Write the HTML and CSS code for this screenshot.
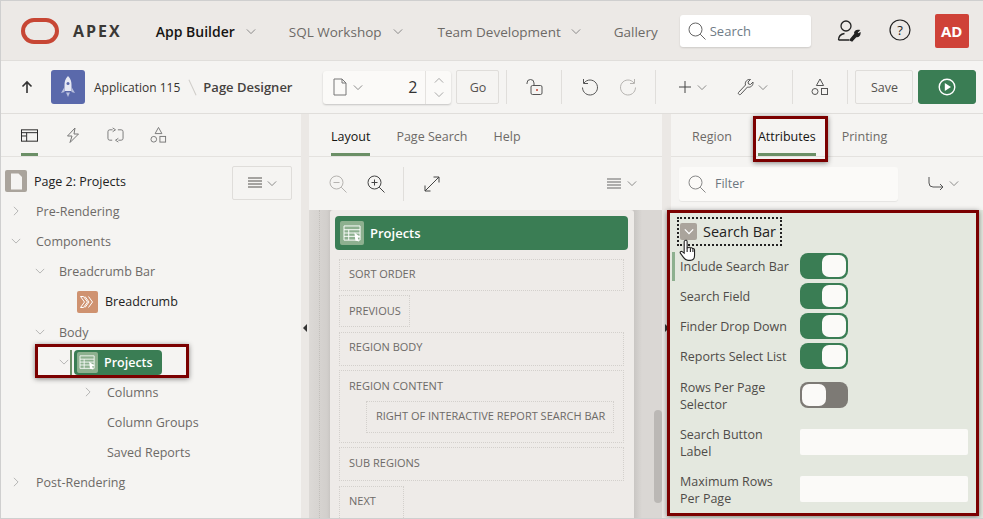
FILE: index.html
```html
<!DOCTYPE html>
<html lang="en">
<head>
  <meta charset="UTF-8">
  <title>Page Designer</title>
  <link rel="stylesheet" href="styles.css">
</head>
<body>
  <svg class="defs" width="0" height="0">
    <symbol id="chev" viewBox="0 0 12 8"><path d="M1 1.500l5 5 5-5" fill="none" stroke="currentColor"/></symbol>
    <symbol id="chev-r" viewBox="0 0 8 12"><path d="M1.500 1l5 5-5 5" fill="none" stroke="currentColor"/></symbol>
    <symbol id="menu" viewBox="0 0 14 12"><path d="M0 1h14M0 4h14M0 7h14M0 10h14" stroke="currentColor" fill="none"/></symbol>
    <symbol id="glass" viewBox="0 0 18 18"><circle cx="7.500" cy="7.500" r="6.500" fill="none" stroke="currentColor"/><path d="M12.200 12.200l5.300 5.300" stroke="currentColor" fill="none"/></symbol>
    <symbol id="shapes" viewBox="0 0 18 18"><path d="M9 1l3.600 6.500H5.400z" fill="none" stroke="currentColor"/><circle cx="4" cy="13.500" r="3" fill="none" stroke="currentColor"/><rect x="10.500" y="10.500" width="6" height="6" fill="none" stroke="currentColor"/></symbol>
    <symbol id="report" viewBox="0 0 20 18"><path d="M1 1h17v15H1z M1 5h17M1 8.500h17M1 12h17M6 5v11" fill="none" stroke="#fff"/><path d="M12 8l6.500 5-3 .5 1.500 4-4-1z" fill="#fff"/></symbol>
  </svg>

  <div class="app">
    <header class="topbar">
      <svg class="logo" width="38" height="26" viewBox="0 0 38 26"><rect x="2" y="2" width="34" height="22" rx="11" fill="none" stroke="#c74634" stroke-width="4"/></svg>
      <span class="brand">APEX</span>
      <nav class="mainnav">
        <a class="current">App Builder <svg class="caret"><use href="#chev"/></svg></a>
        <a>SQL Workshop <svg class="caret"><use href="#chev"/></svg></a>
        <a>Team Development <svg class="caret"><use href="#chev"/></svg></a>
        <a>Gallery</a>
      </nav>
      <div class="topsearch">
        <svg width="18" height="18"><use href="#glass"/></svg>
        <span>Search</span>
      </div>
      <svg class="topicon" width="24" height="24" viewBox="0 0 24 24" fill="none" stroke="#222" stroke-width="1.300"><circle cx="9" cy="7" r="5"/><path d="M1.500 21c0-4 3-6 6-6.500M1.500 21H12"/><path d="M13 21l5-6c-1-2 1-4 4-3.500l-2 2 1 1.500 2-1c0 3-2 4-4 3.500l-4 4.500z" fill="#222"/></svg>
      <svg class="topicon help" width="22" height="22" viewBox="0 0 22 22"><circle cx="11" cy="11" r="10" fill="none" stroke="#222" stroke-width="1.200"/><text x="11" y="15.500" text-anchor="middle" class="helptext">?</text></svg>
      <span class="avatar">AD</span>
    </header>

    <div class="toolbar">
      <svg class="up" width="12" height="14" viewBox="0 0 12 14"><path d="M6 13V2M1.500 6.500L6 2l4.500 4.500" fill="none" stroke="#333" stroke-width="1.600"/></svg>
      <span class="appicon">
        <svg width="16" height="24" viewBox="0 0 16 24"><path d="M8 1c3 3 3.500 6 3.500 9v6h-7v-6C4.500 7 5 4 8 1z" fill="#e6e8f3"/><circle cx="8" cy="8.500" r="1.500" fill="#5a69ab"/><path d="M4.500 12L1 18l3.500-1zM11.500 12L15 18l-3.500-1z" fill="#b9c0de"/><path d="M6 17.500h4L8 22z" fill="#b9c0de"/></svg>
      </span>
      <span class="crumb">Application 115</span>
      <span class="slash"></span>
      <span class="crumb strong">Page Designer</span>

      <div class="pagepick">
        <span class="pick-left">
          <svg width="14" height="18" viewBox="0 0 14 18"><path d="M1 1h8l4 4v12H1z M9 1v4h4" fill="none" stroke="#777"/></svg>
          <svg class="caret"><use href="#chev"/></svg>
        </span>
        <span class="pick-num">2</span>
        <span class="spin">
          <svg class="spin-up" width="10" height="7"><use href="#chev"/></svg>
          <svg width="10" height="7"><use href="#chev"/></svg>
        </span>
      </div>
      <button class="btn go">Go</button>
      <i class="sep"></i>
      <svg class="tool lock" width="20" height="18" viewBox="0 0 20 18" fill="none" stroke="#555"><rect x="6" y="7.500" width="11" height="9" rx="1.500"/><path d="M9 7.500V5a3.500 3.500 0 0 0-7 0v1"/><circle cx="12" cy="12" r="1" fill="#c74634" stroke="none"/></svg>
      <i class="sep"></i>
      <svg class="tool undo" width="18" height="18" viewBox="0 0 18 18" fill="none" stroke="#555"><path d="M3 5a7.500 7.500 0 1 1-1.500 4.500M2.500 1v4.500H7"/></svg>
      <svg class="tool redo" width="18" height="18" viewBox="0 0 18 18" fill="none" stroke="#b5b3b0"><path d="M15 5a7.500 7.500 0 1 0 1.500 4.500M15.500 1v4.500H11"/></svg>
      <i class="sep"></i>
      <span class="tool plus">
        <svg width="12" height="12" viewBox="0 0 12 12"><path d="M0 6h12M6 0v12" stroke="#444" fill="none"/></svg>
        <svg class="caret"><use href="#chev"/></svg>
      </span>
      <span class="tool wrench">
        <svg width="18" height="18" viewBox="0 0 18 18" fill="none" stroke="#555"><path d="M1.500 14.500l7-7.500c-1-3 1.500-6 5-5.500l-2.500 2.500.5 2 2 .5L16 4c.5 3.500-2.500 6-5.500 5l-7 7.500c-1 .8-3-1-2-2z"/></svg>
        <svg class="caret"><use href="#chev"/></svg>
      </span>
      <i class="sep"></i>
      <svg class="tool shapes" width="18" height="18"><use href="#shapes"/></svg>
      <i class="sep"></i>
      <button class="btn save">Save</button>
      <button class="btn run">
        <svg width="18" height="18" viewBox="0 0 18 18"><circle cx="9" cy="9" r="7.800" fill="none" stroke="#fff" stroke-width="1.400"/><path d="M6.800 5l6.200 4-6.200 4z" fill="#fff"/></svg>
      </button>
    </div>

    <div class="panels">
      <section class="panel left">
        <div class="tabs icontabs">
          <span class="tab active">
            <svg width="18" height="13" viewBox="0 0 18 13" fill="none" stroke="#222"><rect x=".5" y=".5" width="17" height="12"/><path d="M.5 3.500h17M6 3.500v9M.5 7h5"/></svg>
          </span>
          <span class="tab">
            <svg width="14" height="16" viewBox="0 0 14 16" fill="none" stroke="#777"><path d="M9 1L1.500 9H6l-2 6.500L12.500 7H8z"/></svg>
          </span>
          <span class="tab">
            <svg width="18" height="16" viewBox="0 0 18 16" fill="none" stroke="#777"><path d="M6 2.500H3a2 2 0 0 0-2 2v7a2 2 0 0 0 2 2h2.500M12 13.500h3a2 2 0 0 0 2-2v-7a2 2 0 0 0-2-2h-3.500M6 .5l3 2-3 2M12 11.500l-3 2 3 2"/></svg>
          </span>
          <span class="tab">
            <svg width="18" height="18"><use href="#shapes"/></svg>
          </span>
        </div>
        <div class="tree">
          <div class="tree-head">
            <span class="pageicon"><svg width="13" height="17" viewBox="0 0 13 17"><path d="M1 .5h7.500L12 4v12.500H1z" fill="#f5f4f2"/></svg></span>
            <span class="pagetitle">Page 2: Projects</span>
            <button class="btn menubtn"><svg width="14" height="12"><use href="#menu"/></svg><svg class="caret"><use href="#chev"/></svg></button>
          </div>
          <div class="node l0"><svg class="tw-r"><use href="#chev-r"/></svg>Pre-Rendering</div>
          <div class="node l0"><svg class="tw-d"><use href="#chev"/></svg>Components</div>
          <div class="node l1"><svg class="tw-d"><use href="#chev"/></svg>Breadcrumb Bar</div>
          <div class="node l2 dark">
            <span class="crumbicon"><svg width="16" height="12" viewBox="0 0 16 12" fill="none" stroke="#fff"><path d="M.5.500h3l4 5.500-4 5.500h-3l4-5.500zM5 .5l4 5.500-4 5.500M8.500.5l4 5.500-4 5.500"/></svg></span>Breadcrumb
          </div>
          <div class="node l1"><svg class="tw-d"><use href="#chev"/></svg>Body</div>
          <div class="node l2 sel">
            <svg class="tw-d"><use href="#chev"/></svg>
            <i class="selbar"></i>
            <span class="pill"><span class="regicon"><svg width="17" height="15"><use href="#report"/></svg></span>Projects</span>
          </div>
          <div class="node l3"><svg class="tw-r"><use href="#chev-r"/></svg>Columns</div>
          <div class="node l3">Column Groups</div>
          <div class="node l3">Saved Reports</div>
          <div class="node l0"><svg class="tw-r"><use href="#chev-r"/></svg>Post-Rendering</div>
        </div>
      </section>

      <div class="gutter"><i class="handle to-left"></i></div>

      <section class="panel center">
        <div class="tabs">
          <span class="tab active">Layout</span>
          <span class="tab">Page Search</span>
          <span class="tab">Help</span>
        </div>
        <div class="gridbar">
          <svg class="zoomout" width="18" height="18" viewBox="0 0 18 18" fill="none" stroke="#b5b3b0"><circle cx="7.500" cy="7.500" r="6.500"/><path d="M12.200 12.200l5.300 5.300M4.500 7.500h6"/></svg>
          <svg class="zoomin" width="18" height="18" viewBox="0 0 18 18" fill="none" stroke="#444"><circle cx="7.500" cy="7.500" r="6.500"/><path d="M12.200 12.200l5.300 5.300M4.500 7.500h6M7.500 4.500v6"/></svg>
          <i class="sep"></i>
          <svg class="expand" width="16" height="16" viewBox="0 0 16 16" fill="none" stroke="#444"><path d="M1 15L15 1M9.500 1H15v5.500M1 9.500V15h5.500"/></svg>
          <span class="gridmenu"><svg width="14" height="12"><use href="#menu"/></svg><svg class="caret"><use href="#chev"/></svg></span>
        </div>
        <div class="canvas">
          <div class="card">
            <div class="cardhead"><span class="cardicon"><svg width="19" height="17"><use href="#report"/></svg></span>Projects</div>
            <div class="slot s-sort">SORT ORDER</div>
            <div class="slot short s-prev">PREVIOUS</div>
            <div class="slot s-body">REGION BODY</div>
            <div class="slot s-content">
              REGION CONTENT
              <div class="slot inner">RIGHT OF INTERACTIVE REPORT SEARCH BAR</div>
            </div>
            <div class="slot s-sub">SUB REGIONS</div>
            <div class="slot shorter s-next">NEXT</div>
          </div>
          <i class="scrollthumb"></i>
        </div>
      </section>

      <div class="gutter"><i class="handle to-right"></i></div>

      <section class="panel right">
        <div class="tabs righttabs">
          <span class="tab">Region</span>
          <span class="tab active">Attributes</span>
          <span class="tab">Printing</span>
        </div>
        <div class="filterbar">
          <div class="filter">
            <svg width="18" height="18"><use href="#glass"/></svg>
            <span>Filter</span>
          </div>
          <span class="goto">
            <svg width="16" height="14" viewBox="0 0 16 14" fill="none" stroke="#555"><path d="M1 0v6a4 4 0 0 0 4 4h10M12 7l3 3-3 3"/></svg>
            <svg class="caret"><use href="#chev"/></svg>
          </span>
        </div>
        <div class="props">
          <div class="grouphead">
            <span class="collapse"><svg width="10" height="7" viewBox="0 0 12 8"><path d="M1 1.500l5 5 5-5" fill="none" stroke="#fff" stroke-width="1.500"/></svg></span>
            <span class="grouptitle">Search Bar</span>
          </div>
          <div class="prop row1 marked"><label>Include Search Bar</label><span class="switch on"></span></div>
          <div class="prop row1"><label>Search Field</label><span class="switch on"></span></div>
          <div class="prop row1"><label>Finder Drop Down</label><span class="switch on"></span></div>
          <div class="prop row1"><label>Reports Select List</label><span class="switch on"></span></div>
          <div class="prop row2"><label>Rows Per Page Selector</label><span class="switch off"></span></div>
          <div class="prop row2"><label>Search Button Label</label><span class="field"></span></div>
          <div class="prop row2"><label>Maximum Rows Per Page</label><span class="field"></span></div>
        </div>
      </section>
    </div>

    <!-- callouts drawn on top of the screenshot -->
    <i class="callout c-attr"></i>
    <i class="callout c-tree"></i>
    <i class="callout c-props"></i>
    <svg class="hand" width="18" height="24" viewBox="0 0 16 22"><path d="M5 1.500c1-.8 2.200-.3 2.200 1V8l1 0c.6-.8 1.700-.5 2 .3.700-.5 1.700-.2 2 .6.800-.3 1.800.2 1.800 1.200v5c0 2.500-1.500 4.500-4 4.500H8c-2 0-3-1-4-2.500L1 13c-.6-1 .6-2.200 1.700-1.400L4.500 13V2.500c0-.4.200-.8.500-1z" fill="#fff" stroke="#222"/><path d="M7.200 8v4M10.200 8.500v3.500M12.500 9.500V12" stroke="#222" fill="none"/></svg>
  </div>
</body>
</html>
```

FILE: styles.css
```css
* { box-sizing: border-box; }
html, body { margin: 0; height: 100%; }
body { font-family: "Open Sans", "Liberation Sans", sans-serif; font-size: 12.5px; color: #55524f; background: #fff; overflow: hidden; }
button { font-family: inherit; }
.defs { position: absolute; }
.caret { width: 10px; height: 7px; color: #777; flex: none; }

.app { position: relative; width: 983px; height: 519px; display: flex; flex-direction: column; border: 1px solid #cfcfcf; border-right: 0; overflow: hidden; }

/* top bar */
.topbar { height: 60px; flex: none; display: flex; align-items: center; background: #ece9e6; border-bottom: 1px solid #e0dedb; padding-left: 20px; }
.logo { flex: none; }
.brand { font-size: 16px; font-weight: 700; letter-spacing: 2px; color: #3b3936; margin-left: 14px; }
.mainnav { display: flex; align-items: center; margin-left: 34px; padding-top: 2px; }
.mainnav a { font-size: 13.5px; color: #6d6a67; margin-right: 35px; display: flex; align-items: center; gap: 11px; white-space: nowrap; }
.mainnav a.current { color: #161513; font-size: 14px; font-weight: 600; margin-right: 33px; }
.mainnav a:nth-child(3) { margin-right: 33px; gap: 10px; }
.mainnav a:last-child { margin-right: 0; }
.topsearch { width: 131px; height: 32px; margin-left: 22px; background: #fff; border-radius: 3px; box-shadow: 0 1px 2px #0002; display: flex; align-items: center; gap: 4px; padding-left: 8px; color: #6f7b86; font-size: 13px; }
.topsearch svg { color: #666; }
.topicon { margin-left: 26px; flex: none; }
.topicon.help { margin-left: 28px; margin-top: -2px; }
.helptext { font-size: 13px; fill: #222; }
.avatar { width: 34px; height: 34px; margin-left: 24px; background: #cf4238; border-radius: 2px; color: #fff; font-size: 15px; font-weight: 700; display: flex; align-items: center; justify-content: center; flex: none; }

/* toolbar */
.toolbar { height: 53px; flex: none; display: flex; align-items: center; background: #f5f4f2; border-bottom: 1px solid #e0dedb; padding-left: 20px; }
.up { flex: none; }
.appicon { width: 34px; height: 34px; margin-left: 18px; background: #5a69ab; border-radius: 3px; display: flex; align-items: center; justify-content: center; flex: none; }
.crumb { margin-left: 9px; color: #35332f; white-space: nowrap; font-size: 12px; }
.crumb.strong { margin-left: 10px; font-size: 13px; font-weight: 600; color: #45423f; }
.slash { width: 1px; height: 17px; margin-left: 12px; background: #cfcdc9; transform: rotate(-25deg); flex: none; }
.pagepick { width: 128px; height: 33px; margin-left: 31px; display: flex; align-items: center; background: #fbfaf8; border-radius: 3px; box-shadow: 0 1px 2px #0003; flex: none; }
.pick-left { display: flex; align-items: center; gap: 6px; padding-left: 10px; }
.pick-num { flex: 1; text-align: right; padding-right: 8px; font-size: 16px; color: #333; }
.spin { width: 26px; height: 33px; border-left: 1px solid #e4e2df; display: flex; flex-direction: column; align-items: center; justify-content: center; gap: 7px; color: #999; }
.spin-up { transform: rotate(180deg); }
.btn { height: 34px; background: #f5f4f2; border: 1px solid #dfddda; border-radius: 2px; color: #55524f; font-size: 12.5px; padding: 0; display: flex; align-items: center; justify-content: center; flex: none; }
.go { width: 43px; margin-left: 5px; }
.sep { width: 1px; height: 34px; background: #e0dedb; flex: none; display: block; }
.toolbar .sep { margin-left: 7px; }
.tool { flex: none; color: #555; display: flex; align-items: center; }
.lock { margin-left: 18px; margin-right: 9px; }
.undo { margin-left: 19px; }
.redo { margin-left: 20px; margin-right: 11px; }
.plus { margin-left: 23px; gap: 6px; }
.wrench { margin-left: 30px; gap: 3px; margin-right: 17px; }
.shapes { margin-left: 18px; margin-right: 11px; }
.save { width: 58px; margin-left: 7px; }
.run { width: 58px; margin-left: 5px; background: #3a7d54; border-color: #3a7d54; border-radius: 3px; }

/* panels */
.panels { flex: 1; min-height: 0; display: flex; }
.panel { display: flex; flex-direction: column; background: #f5f4f2; min-width: 0; position: relative; flex: none; }
.left { width: 300px; }
.center { width: 353px; }
.right { width: 312px; }
.gutter { width: 9px; flex: none; background: #ebe8e5; position: relative; }
.left + .gutter { width: 8px; }
.handle { position: absolute; top: 210px; left: 2px; width: 0; height: 0; border-top: 4px solid transparent; border-bottom: 4px solid transparent; }
.to-left { border-right: 4px solid #333; }
.to-right { border-left: 4px solid #333; left: 3px; }

.tabs { height: 43px; flex: none; display: flex; border-bottom: 1px solid #e4e2df; padding-left: 22px; gap: 26px; }
.tab { height: 42px; display: flex; align-items: center; color: #6d6a67; border-bottom: 3px solid transparent; padding-top: 5px; white-space: nowrap; }
.tab.active { color: #161513; border-bottom-color: #6b8f66; }
.icontabs { padding-left: 20px; gap: 26px; }
.icontabs .tab { width: 17px; justify-content: center; color: #777; padding-top: 3px; }
.righttabs { padding-left: 21px; gap: 26px; }

/* tree */
.tree { flex: 1; padding-top: 9px; }
.tree-head { height: 34px; display: flex; align-items: center; padding-left: 4px; position: relative; color: #222; margin-bottom: -4px; }
.pageicon { width: 22px; height: 22px; background: #aaa49c; border-radius: 2px; display: flex; align-items: center; justify-content: center; margin-bottom: 4px; }
.pagetitle { margin-left: 7px; margin-bottom: 4px; }
.menubtn { width: 60px; margin-left: auto; margin-right: 9px; gap: 5px; }
.node { height: 30px; display: flex; align-items: center; color: #6d6a67; white-space: nowrap; position: relative; }
.node > svg { width: 10px; height: 10px; color: #aaa; position: absolute; }
.l0 { padding-left: 35px; }
.l0 > svg { left: 10px; }
.l1 { padding-left: 58px; }
.l1 > svg { left: 34px; }
.l2 { padding-left: 76px; }
.l3 { padding-left: 106px; }
.l3 > svg { left: 82px; }
.dark { color: #222; padding-left: 76px; height: 31px; }
.crumbicon { width: 21px; height: 22px; background: #cf9270; border-radius: 2px; display: flex; align-items: center; justify-content: center; margin-right: 7px; }
.sel > svg { left: 58px; }
.selbar { position: absolute; left: 69px; top: 3px; width: 2px; height: 25px; background: #6b8f66; }
.pill { margin-left: -3px; height: 25px; width: 88px; background: #3a7d54; border-radius: 4px; color: #fff; font-weight: 600; display: flex; align-items: center; padding: 0 0 0 3px; gap: 6px; }
.regicon { width: 21px; height: 21px; background: #8db08f; border-radius: 2px; display: flex; align-items: center; justify-content: center; }

/* layout tab */
.gridbar { height: 53px; flex: none; display: flex; align-items: center; padding-left: 20px; position: relative; }
.zoomin { margin-left: 20px; }
.gridbar .sep { margin-left: 18px; }
.expand { margin-left: 20px; }
.gridmenu { margin-left: auto; margin-right: 25px; display: flex; align-items: center; gap: 6px; color: #666; }
.canvas { flex: 1; min-height: 0; position: relative; overflow: hidden; padding: 0 21px; background: linear-gradient(90deg, #dcd9d6, #d2cfcc 18px, #c9c6c3 21px, #c9c6c3 21px); }
.canvas::before { content: ""; position: absolute; left: 10px; right: 18px; top: 0; bottom: 0; border: 1px dotted #c2bfbb; border-width: 0 1px; }
.canvas::after { content: ""; position: absolute; right: 0; top: 0; bottom: 0; width: 28px; background: linear-gradient(90deg, #c9c6c3, #dad7d4 8px); }
.card { position: relative; z-index: 1; width: 304px; height: 320px; background: #eeebe8; border-radius: 3px; padding: 6px 6px 0 5px; }
.cardhead { height: 34px; background: #3a7d54; border-radius: 4px; color: #fff; font-size: 13px; font-weight: 600; display: flex; align-items: center; padding-left: 5px; gap: 6px; margin-bottom: 9px; }
.cardicon { width: 24px; height: 24px; background: #8db08f; border-radius: 2px; display: flex; align-items: center; justify-content: center; }
.slot { margin-left: 4px; border: 1px dotted #d3d0cc; color: #6d6a67; font-size: 11px; padding: 6px 9px; white-space: nowrap; margin-right: 4px; }
.s-sort { height: 32px; margin-bottom: 4px; }
.short { width: 71px; }
.s-prev { height: 32px; margin-bottom: 5px; padding-top: 7px; }
.s-body { height: 34px; margin-bottom: 4px; }
.s-content { height: 73px; margin-bottom: 4px; padding-top: 7px; }
.inner { margin: 8px 0 0 17px; height: 32px; }
.s-sub { height: 34px; margin-bottom: 5px; padding-top: 7px; }
.shorter { width: 65px; height: 34px; }
.scrollthumb { position: absolute; z-index: 1; left: 345px; top: 200px; width: 8px; height: 93px; background: #bbb8b5; border-radius: 4px; }

/* properties */
.filterbar { height: 53px; flex: none; display: flex; align-items: center; padding-left: 8px; }
.filter { width: 219px; height: 34px; background: #fbfaf8; border-radius: 3px; display: flex; align-items: center; gap: 9px; padding-left: 9px; color: #6d7780; box-shadow: 0 1px 1px #0001; }
.filter svg { color: #888; }
.goto { margin-left: 30px; display: flex; align-items: center; gap: 5px; }
.props { flex: 1; min-height: 0; background: #e4e8df; padding: 7px 0 0 10px; position: relative; margin-left: -1px; }
.grouphead { height: 29px; width: 105px; margin-left: -3px; outline: 2px dotted #222; outline-offset: -2px; display: flex; align-items: center; padding-left: 3px; gap: 6px; margin-bottom: 5px; }
.collapse { width: 17px; height: 17px; background: #aaa49c; border-radius: 2px; display: flex; align-items: center; justify-content: center; }
.grouptitle { font-size: 14.5px; color: #222; }
.prop { display: flex; align-items: center; position: relative; }
.prop label { width: 120px; flex: none; padding-right: 12px; color: #4f4c49; line-height: 17px; }
.row1 { height: 30px; }
.row1 label { white-space: nowrap; }
.row2 { height: 47px; }
.row2 label { padding-top: 2px; }
.marked::before { content: ""; position: absolute; left: -8px; top: 1px; width: 3px; height: 29px; background: #8db08f; }
.switch { width: 48px; height: 26px; border-radius: 8px; position: relative; }
.switch::after { content: ""; position: absolute; top: 2px; width: 24px; height: 22px; background: #fbfaf8; border-radius: 7px; }
.on { background: #3a7d54; }
.on::after { right: 2px; }
.off { background: #7d7a75; }
.off::after { left: 2px; }
.field { width: 168px; height: 26px; background: #fbfaf8; border-radius: 2px; }

/* callouts */
.callout { position: absolute; border: 3px solid #7b0000; box-shadow: 0 1px 5px #0007; z-index: 3; pointer-events: none; }
.c-attr { left: 752px; top: 115px; width: 75px; height: 46px; }
.c-tree { left: 34px; top: 343px; width: 154px; height: 34px; }
.c-props { left: 666px; top: 209px; width: 312px; height: 306px; }
.hand { position: absolute; left: 678px; top: 238px; z-index: 4; }
```
